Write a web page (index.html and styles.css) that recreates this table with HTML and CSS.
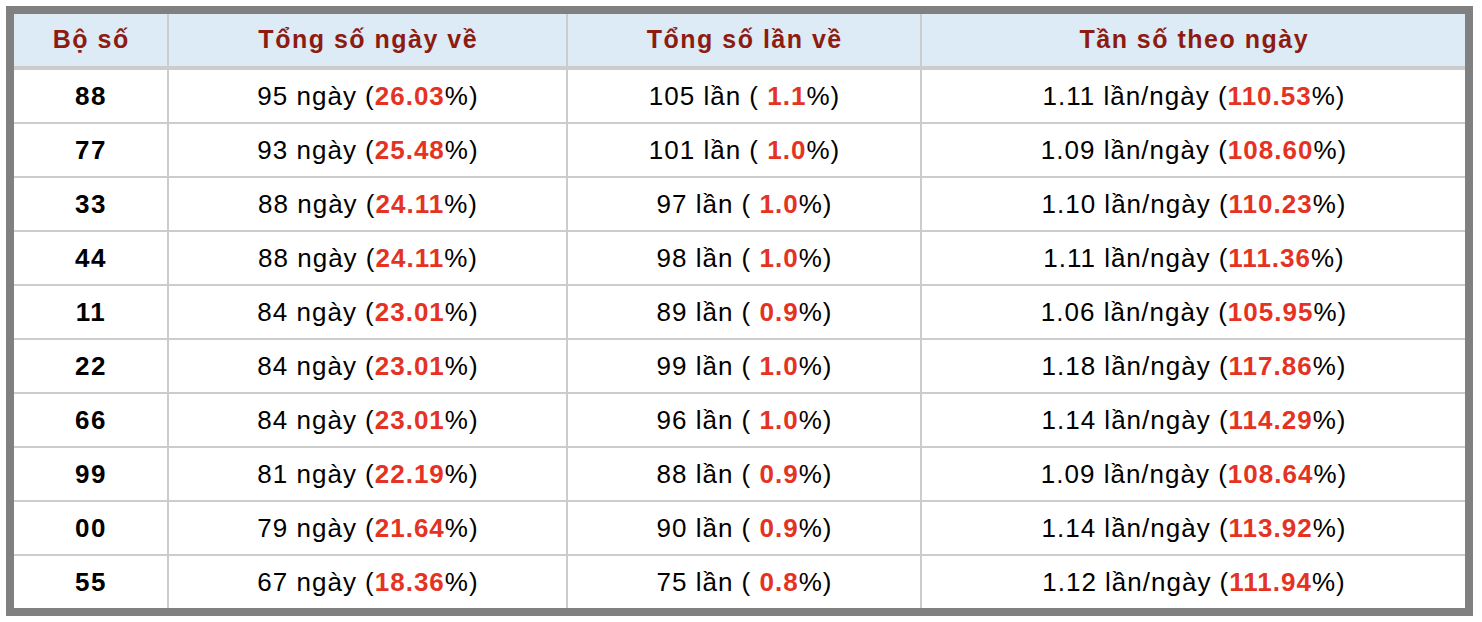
FILE: index.html
```html
<!DOCTYPE html>
<html lang="vi">
<head>
<meta charset="utf-8">
<title>Thống kê</title>
<link rel="stylesheet" href="styles.css">
</head>
<body>
<div class="frame">
  <div class="grid">
    <div class="th">Bộ số</div>
    <div class="th sep">Tổng số ngày về</div>
    <div class="th sep">Tổng số lần về</div>
    <div class="th sep">Tần số theo ngày</div>

    <div class="td num">88</div>
    <div class="td sep">95 ngày (<b>26.03</b>%)</div>
    <div class="td sep">105 lần ( <b>1.1</b>%)</div>
    <div class="td sep">1.11 lần/ngày (<b>110.53</b>%)</div>

    <div class="td num">77</div>
    <div class="td sep">93 ngày (<b>25.48</b>%)</div>
    <div class="td sep">101 lần ( <b>1.0</b>%)</div>
    <div class="td sep">1.09 lần/ngày (<b>108.60</b>%)</div>

    <div class="td num">33</div>
    <div class="td sep">88 ngày (<b>24.11</b>%)</div>
    <div class="td sep">97 lần ( <b>1.0</b>%)</div>
    <div class="td sep">1.10 lần/ngày (<b>110.23</b>%)</div>

    <div class="td num">44</div>
    <div class="td sep">88 ngày (<b>24.11</b>%)</div>
    <div class="td sep">98 lần ( <b>1.0</b>%)</div>
    <div class="td sep">1.11 lần/ngày (<b>111.36</b>%)</div>

    <div class="td num">11</div>
    <div class="td sep">84 ngày (<b>23.01</b>%)</div>
    <div class="td sep">89 lần ( <b>0.9</b>%)</div>
    <div class="td sep">1.06 lần/ngày (<b>105.95</b>%)</div>

    <div class="td num">22</div>
    <div class="td sep">84 ngày (<b>23.01</b>%)</div>
    <div class="td sep">99 lần ( <b>1.0</b>%)</div>
    <div class="td sep">1.18 lần/ngày (<b>117.86</b>%)</div>

    <div class="td num">66</div>
    <div class="td sep">84 ngày (<b>23.01</b>%)</div>
    <div class="td sep">96 lần ( <b>1.0</b>%)</div>
    <div class="td sep">1.14 lần/ngày (<b>114.29</b>%)</div>

    <div class="td num">99</div>
    <div class="td sep">81 ngày (<b>22.19</b>%)</div>
    <div class="td sep">88 lần ( <b>0.9</b>%)</div>
    <div class="td sep">1.09 lần/ngày (<b>108.64</b>%)</div>

    <div class="td num">00</div>
    <div class="td sep">79 ngày (<b>21.64</b>%)</div>
    <div class="td sep">90 lần ( <b>0.9</b>%)</div>
    <div class="td sep">1.14 lần/ngày (<b>113.92</b>%)</div>

    <div class="td num last">55</div>
    <div class="td sep last">67 ngày (<b>18.36</b>%)</div>
    <div class="td sep last">75 lần ( <b>0.8</b>%)</div>
    <div class="td sep last">1.12 lần/ngày (<b>111.94</b>%)</div>
  </div>
</div>
</body>
</html>
```

FILE: styles.css
```css
html, body {
  background: #ffffff;
}
body {
  margin: 6px;
  font-family: "Liberation Sans", Arial, Helvetica, sans-serif;
  color: #000000;
}
.frame {
  width: 1467px;
  box-sizing: border-box;
  border: 8px solid #808080;
}
.grid {
  display: grid;
  grid-template-columns: 153px 399px 354px 545px;
}
.th, .td {
  display: flex;
  align-items: center;
  justify-content: center;
  box-sizing: border-box;
  white-space: pre;
}
.th {
  height: 56px;
  padding: 0 0 2px 1.5px;
  background: #dcebf5;
  color: #8e1b11;
  font-weight: bold;
  font-size: 25px;
  letter-spacing: 1.5px;
  border-bottom: 4px solid #cccccc;
}
.td {
  height: 54px;
  padding: 0 0 0 1px;
  font-size: 26px;
  letter-spacing: 1px;
  border-bottom: 2px solid #cccccc;
}
.td.last {
  height: 52px;
  border-bottom: none;
}
.sep {
  border-left: 2px solid #cccccc;
}
.num {
  font-weight: bold;
  letter-spacing: 1.5px;
}
.td b {
  color: #e53323;
  font-weight: bold;
}
```
